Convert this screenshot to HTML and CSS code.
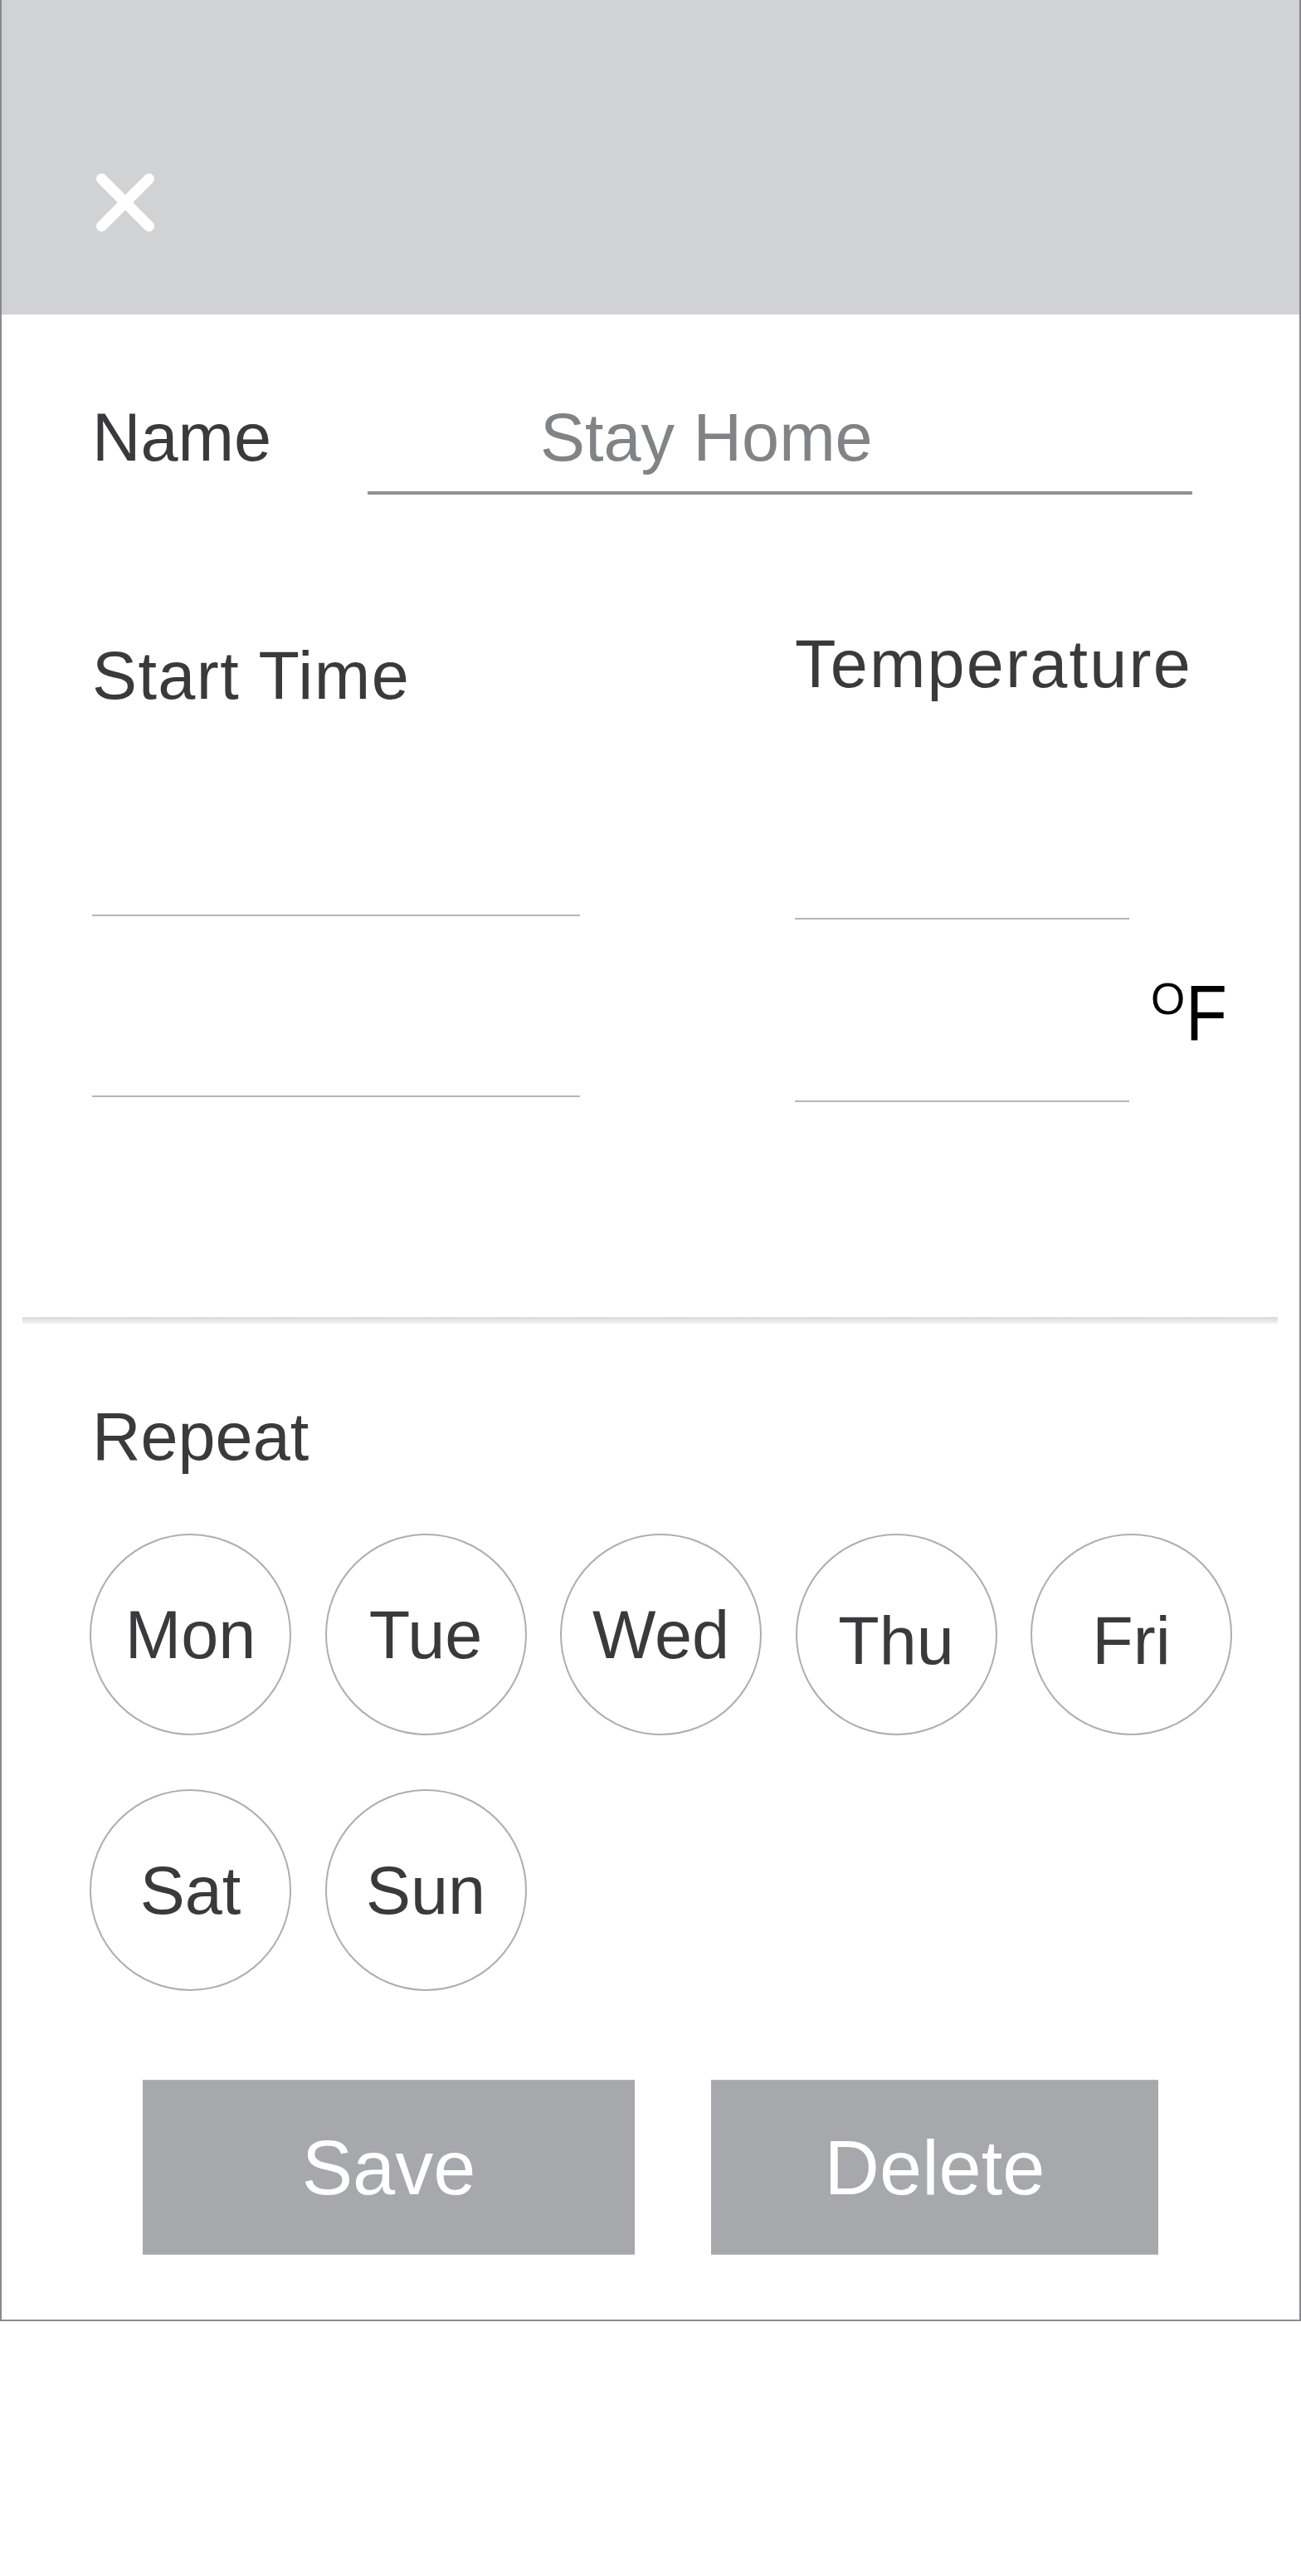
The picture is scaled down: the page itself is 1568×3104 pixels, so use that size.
FILE: index.html
```html
<!DOCTYPE html>
<html lang="en">
<head>
<meta charset="utf-8">
<title>Edit Schedule</title>
<link rel="stylesheet" href="styles.css">
</head>
<body>
<div class="card">
  <header class="topbar">
    <button class="close" aria-label="Close">
      <svg viewBox="0 0 70 70" width="70" height="70"><path d="M6.5 6.5 L63.5 63.5 M63.5 6.5 L6.5 63.5" stroke="#ffffff" stroke-width="13" stroke-linecap="round" fill="none"/></svg>
    </button>
  </header>
  <main class="content">
    <div class="name-row">
      <div class="label name-label">Name</div>
      <div class="name-input">Stay Home</div>
    </div>

    <div class="sched">
      <div class="col-time">
        <div class="label start-label">Start Time</div>
        <div class="field time-f1"></div>
        <div class="field time-f2"></div>
      </div>
      <div class="col-temp">
        <div class="label temp-label">Temperature</div>
        <div class="field temp-f1"></div>
        <div class="temp-row">
          <div class="field temp-f2"></div>
          <div class="unit"><span class="deg">O</span><span class="fah">F</span></div>
        </div>
      </div>
    </div>

    <div class="divider"></div>

    <div class="label repeat-label">Repeat</div>
    <div class="days">
      <div class="day">Mon</div>
      <div class="day">Tue</div>
      <div class="day">Wed</div>
      <div class="day day-low">Thu</div>
      <div class="day day-low">Fri</div>
      <div class="day">Sat</div>
      <div class="day">Sun</div>
    </div>

    <div class="actions">
      <button class="btn btn-save">Save</button>
      <button class="btn btn-delete">Delete</button>
    </div>
  </main>
</div>
</body>
</html>
```
FILE: styles.css
```css
html, body {
  margin: 0;
  padding: 0;
  background: #ffffff;
}

body {
  font-family: "Liberation Sans", Arial, sans-serif;
}

.card {
  width: 1568px;
  box-sizing: border-box;
  border-left: 2px solid #8a8a8c;
  border-right: 2px solid #8a8a8c;
  border-bottom: 2px solid #8a8a8c;
}

.topbar {
  height: 379px;
  box-sizing: border-box;
  background: #d1d2d4;
  padding: 209px 0 0 114px;
}

.close {
  display: block;
  border: 0;
  padding: 0;
  margin: 0;
  background: none;
  width: 70px;
  height: 70px;
}

.close svg {
  display: block;
}

.content {
  padding: 108px 0 78px 109px;
}

.label {
  font-size: 81px;
  line-height: 80px;
  color: #3a3a3c;
  white-space: nowrap;
}

/* Name row */
.name-row {
  display: flex;
  align-items: flex-start;
}

.name-label {
  width: 332px;
}

.name-input {
  width: 994px;
  box-sizing: border-box;
  padding: 0 0 25px 208px;
  border-bottom: 4px solid #919194;
  font-size: 81px;
  line-height: 80px;
  color: #828386;
  white-space: nowrap;
}

/* Start time / temperature */
.sched {
  display: flex;
  align-items: flex-start;
  margin-top: 164px;
}

.col-time {
  width: 588px;
  padding-top: 14px;
}

.start-label {
  letter-spacing: 1.4px;
}

.temp-label {
  letter-spacing: 2.2px;
}

.field {
  border-bottom: 2px solid #b6b6b8;
}

.time-f1 {
  height: 248px;
}

.time-f2 {
  height: 216px;
}

.col-temp {
  margin-left: 259px;
}

.temp-f1 {
  width: 403px;
  height: 266px;
}

.temp-row {
  display: flex;
  align-items: flex-start;
}

.temp-f2 {
  width: 403px;
  height: 218px;
}

.unit {
  display: flex;
  align-items: flex-start;
  margin: 65px 0 0 26px;
  color: #000000;
}

.deg {
  font-size: 53px;
  line-height: 53px;
  margin-top: 4px;
}

.fah {
  display: inline-block;
  font-size: 95px;
  line-height: 95px;
  transform: scaleX(0.86);
  transform-origin: 8px 0;
}

/* Divider */
.divider {
  margin: 259px 0 0 -84px;
  width: 1513px;
  height: 8px;
  background: linear-gradient(#d8d8d9, #f4f4f4);
}

/* Repeat */
.repeat-label {
  margin-top: 96px;
}

.days {
  display: grid;
  grid-template-columns: repeat(5, 243px);
  column-gap: 40.5px;
  row-gap: 65px;
  margin: 77px 0 0 -3px;
}

.day {
  width: 243px;
  height: 243px;
  box-sizing: border-box;
  border: 2px solid #aeaeb0;
  border-radius: 50%;
  display: flex;
  align-items: center;
  justify-content: center;
  font-size: 81px;
  line-height: 80px;
  color: #3a3a3c;
}

.day-low {
  padding-top: 14px;
}

/* Buttons */
.actions {
  display: flex;
  gap: 92px;
  margin: 107px 0 0 61px;
}

.btn {
  height: 211px;
  border: 0;
  border-top: 1px solid #b9babc;
  border-bottom: 1px solid #b9babc;
  padding: 0;
  margin: 0;
  background: #a7a8ab;
  color: #ffffff;
  font-family: "Liberation Sans", Arial, sans-serif;
  font-size: 92px;
  line-height: 92px;
}

.btn-save {
  width: 593px;
}

.btn-delete {
  width: 539px;
}
```
